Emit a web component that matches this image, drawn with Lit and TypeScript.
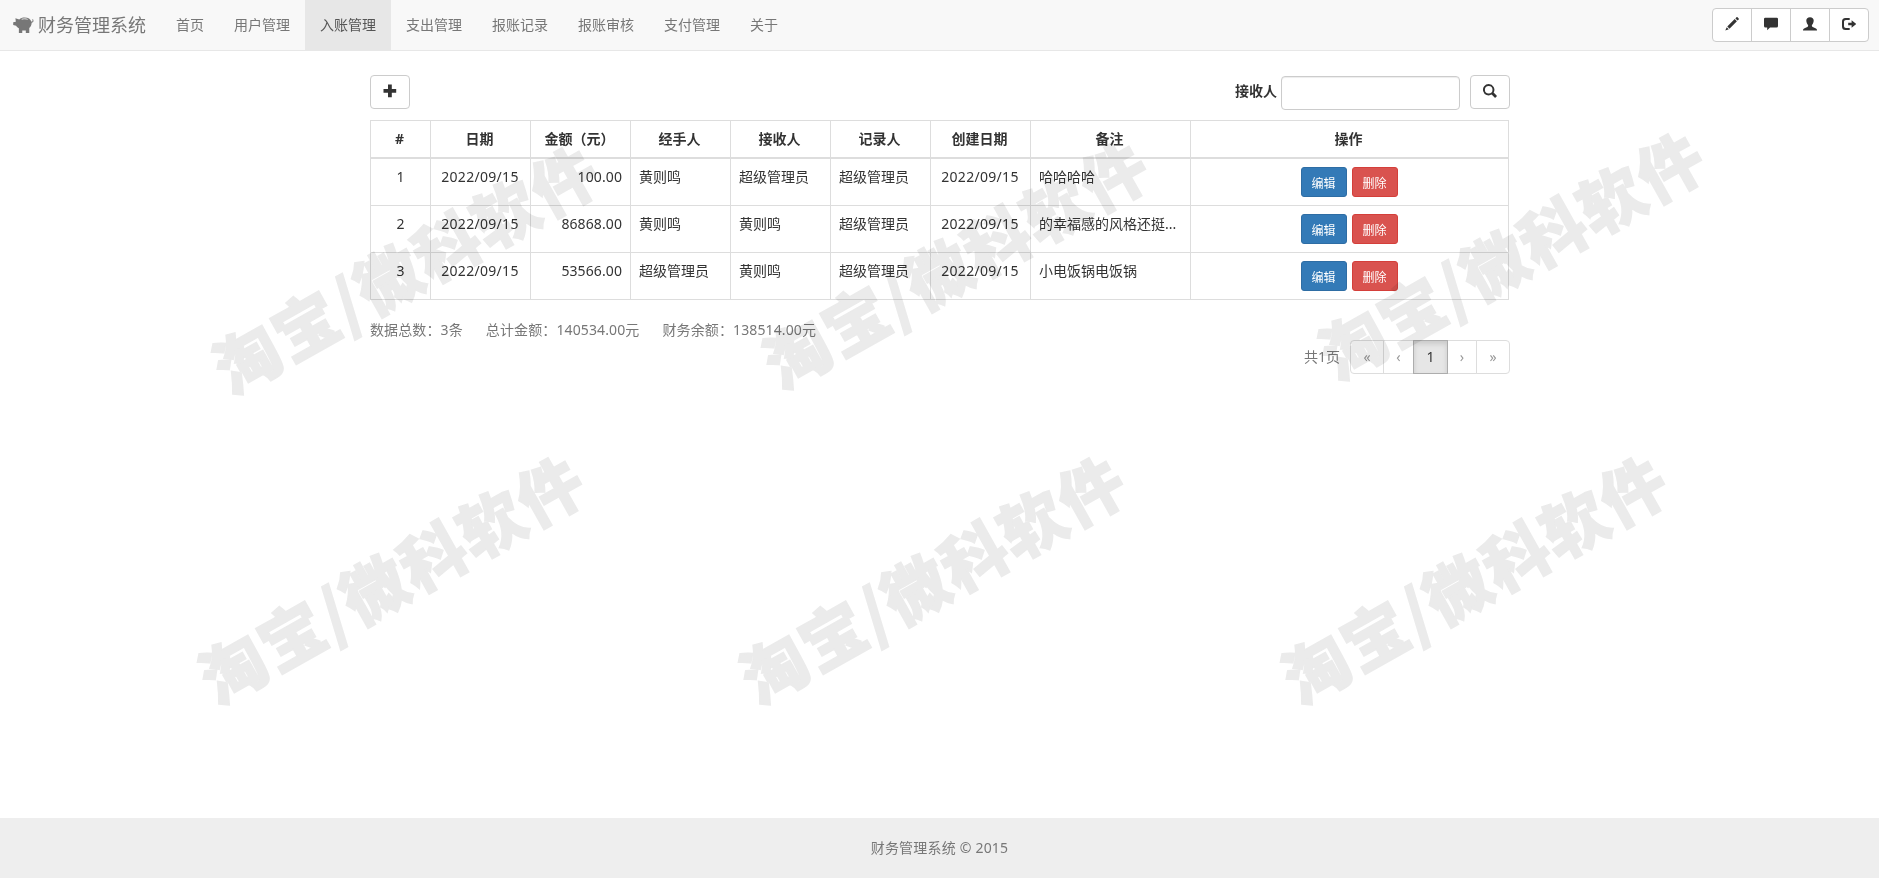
import { LitElement, html, svg, css } from "lit";
import { customElement } from "lit/decorators.js";

const icon = (name: string, body: unknown) => html`<svg class="icon ${name}" viewBox="0 0 14 14" aria-hidden="true">${body}</svg>`;

const plus = icon("plus", svg`<path d="M5 .5h3.800v4.400h4.400v3.900H8.800v4.400H5V8.800H.5V4.900H5z"/>`);
const search = icon("search", svg`<path fill-rule="evenodd" d="M5.700 0a5.700 5.700 0 1 0 2.900 10.600l3 3c.3.300.7.300 1 0l1-1c.3-.3.3-.7 0-1l-3-3A5.700 5.700 0 0 0 5.700 0zm0 1.900a3.800 3.800 0 1 1 0 7.600 3.800 3.800 0 0 1 0-7.600z"/>`);
const pencil = icon("pencil", svg`<path d="M11.500.3c.3-.3.7-.3 1 0l1.200 1.200c.3.300.3.700 0 1l-1.100 1.100-2.200-2.200zM9.700 2.100l2.200 2.200-7.400 7.400-2.200-2.200zM1.700 10.200l2.100 2.100-3.500 1.300z"/>`);
const comment = icon("comment", svg`<path d="M1.200.8h11.600A1.200 1.200 0 0 1 14 2v7a1.500 1.500 0 0 1-1.500 1.500H6l-2.800 2.700v-2.700H1.500A1.500 1.500 0 0 1 0 9V2A1.200 1.200 0 0 1 1.200.8z"/>`);
const user = icon("user", svg`<path d="M7 .2c2.300 0 3.700 1.300 3.700 3.400 0 1.800-.8 3.600-1.800 4.500v.8c0 .5.3.8.8 1l2.800 1.300c1 .5 1.500 1 1.500 2.300H0c0-1.300.5-1.800 1.500-2.300l2.800-1.300c.5-.2.8-.5.8-1v-.8c-1-.9-1.800-2.700-1.800-4.500C3.300 1.500 4.700.200 7 .200z"/>`);
const logout = icon("logout", svg`<path d="M7.700 1v2H4c-1.300 0-2 .7-2 2v4c0 1.300.7 2 2 2h3.700v2H3.500A3.500 3.500 0 0 1 0 9.500v-5A3.500 3.500 0 0 1 3.500 1zM9.600 3.200 14.200 7l-4.600 3.800V8.200H6.200V5.800h3.400z"/>`);
const piggy = html`<svg class="pig" viewBox="0 0 20 16" aria-hidden="true"><path d="M2.300 1 6 2.200C7.300.800 9 .300 11 .300c3.500 0 5.800 1.500 6.500 4 .7.100 1.300-.2 1.100-1l-.4-.9.900-.300c.8 1.600.6 3-1.300 3.300-.1 2.200-.9 3.700-2.300 5v4.700h-3.300v-2.300H8.800v2.300H5.600v-4.400C4.300 9.900 3.500 9.200 3 8.300L.2 7.600V4.900l2.500-.5z"/><path class="slot" d="M8.300 2.100c2-.7 4-.6 5.600.1"/></svg>`;

const NAV = ["首页", "用户管理", "入账管理", "支出管理", "报账记录", "报账审核", "支付管理", "关于"];
const HEAD = ["#", "日期", "金额（元）", "经手人", "接收人", "记录人", "创建日期", "备注", "操作"];
const ROWS = [
  ["1", "2022/09/15", "100.00", "黄则鸣", "超级管理员", "超级管理员", "2022/09/15", "哈哈哈哈"],
  ["2", "2022/09/15", "86868.00", "黄则鸣", "黄则鸣", "超级管理员", "2022/09/15", "的幸福感的风格还挺..."],
  ["3", "2022/09/15", "53566.00", "超级管理员", "黄则鸣", "超级管理员", "2022/09/15", "小电饭锅电饭锅"],
];
const CELL = ["mid", "mid date", "num", "", "", "", "mid date", ""];
const MARKS = [[404, 267], [954, 262], [1510, 253], [390, 577], [931, 577], [1473, 577]];

@customElement("app-root")
export class AppRoot extends LitElement {
  static styles = css`
    :host { display: flex; flex-direction: column; position: relative; height: 100vh; overflow: hidden; background: #fff; color: #333;
      font: 14px/20px "Noto Sans", "Noto Sans CJK SC", sans-serif; }
    * { box-sizing: border-box; }
    .icon { width: 14px; height: 14px; fill: #333; display: block; }
    .navbar { display: flex; height: 51px; flex: none; background: #f8f8f8; border-bottom: 1px solid #e7e7e7; color: #777; }
    .brand { display: flex; align-items: center; width: 161px; padding-left: 13px; gap: 4px; font-size: 18px; white-space: nowrap; }
    .pig { width: 21px; height: 17px; fill: #777; }
    .slot { fill: none; stroke: #f8f8f8; stroke-width: .8; }
    .nav { display: flex; flex: 1; }
    .nav a { padding: 15px; height: 50px; }
    .nav .active { background: #e7e7e7; color: #555; }
    .tools { display: flex; padding: 8px 10px 0 0; }
    .btn { font: inherit; display: flex; align-items: center; justify-content: center; width: 40px; height: 34px; margin: 0; padding: 0 0 2px;
      border: 1px solid #ccc; border-radius: 4px; background: #fff; color: #333; }
    .tools .btn + .btn { margin-left: -1px; }
    .tools .btn { border-radius: 0; }
    .tools .btn:first-child { border-radius: 4px 0 0 4px; }
    .tools .btn:last-child { border-radius: 0 4px 4px 0; }
    .main { width: 1140px; margin: 24px 0 0 370px; flex: 1; }
    .bar { display: flex; height: 45px; align-items: flex-start; }
    .bar label { margin: 6px 4px 0 auto; font-weight: 700; }
    .field { width: 179px; height: 34px; margin: 1px 10px 0 0; border: 1px solid #ccc; border-radius: 4px; box-shadow: inset 0 1px 1px rgba(0,0,0,.075); background: #fff; }
    table { width: 1139px; table-layout: fixed; border-collapse: collapse; }
    th, td { border: 1px solid #ddd; padding: 8px; vertical-align: top; text-align: left; white-space: nowrap; height: 47px; }
    th { border-bottom-width: 2px; text-align: center; font-weight: 700; height: 37px; padding: 8px 9px 8px 7px; }
    .c0 { width: 60px; } .c1 { width: 100px; } .c7 { width: 160px; }
    td.mid { text-align: center; }
    td.date { letter-spacing: .3px; padding: 8px 8px 8px 7px; }
    td.num { text-align: right; letter-spacing: .1px; }
    .acts { display: flex; justify-content: center; gap: 5px; padding-right: 1px; }
    .sm { font: 12px/18px "Noto Sans CJK SC", sans-serif; width: 46px; height: 30px; padding: 2px 0 0; margin: 0; border-radius: 3px; color: #fff; border: 1px solid; }
    .edit { background: #337ab7; border-color: #2e6da4; }
    .del { background: #d9534f; border-color: #d43f3a; }
    .sum { display: flex; gap: 23px; margin-top: 20px; color: #777; letter-spacing: .12px; }
    .pager { display: flex; justify-content: flex-end; align-items: flex-start; color: #777; }
    .pager .total { margin: 7px 11px 0 0; }
    .pg { width: 31px; color: #999; border-color: #ddd; border-radius: 0; background: #fff; padding: 0; margin-left: -1px; }
    .pg.wide { width: 34px; }
    .pg.thin { width: 30px; }
    .pg.first { border-radius: 4px 0 0 4px; }
    .pg.last { border-radius: 0 4px 4px 0; width: 34px; }
    .pg.on { width: 35px; position: relative; background: #e6e6e6; border-color: #adadad; color: #333; box-shadow: inset 0 3px 5px rgba(0,0,0,.125); z-index: 1; }
    footer { flex: none; height: 60px; background: #eee; color: #777; text-align: center; padding-top: 20px; letter-spacing: .2px; }
    .marks { position: absolute; inset: 0; width: 1879px; height: 878px; pointer-events: none; mix-blend-mode: multiply; z-index: 2; }
    .marks text { font: 900 65px "Noto Sans CJK SC", sans-serif; fill: #ebebeb; stroke: #ebebeb; stroke-width: 1.5px; text-anchor: middle; dominant-baseline: central; }
  `;

  render() {
    return html`
      <nav class="navbar">
        <div class="brand">${piggy}<span>财务管理系统</span></div>
        <div class="nav">${NAV.map((n, i) => html`<a class=${i === 2 ? "active" : ""}>${n}</a>`)}</div>
        <div class="tools">${[pencil, comment, user, logout].map((i) => html`<button class="btn">${i}</button>`)}</div>
      </nav>
      <main class="main">
        <div class="bar">
          <button class="btn">${plus}</button>
          <label>接收人</label><input class="field" />
          <button class="btn">${search}</button>
        </div>
        <table>
          <thead><tr>${HEAD.map((h, i) => html`<th class=${i > 0 && i < 7 ? "c1" : `c${i}`}>${h}</th>`)}</tr></thead>
          <tbody>
            ${ROWS.map((r) => html`<tr>${r.map((c, i) => html`<td class=${CELL[i]}>${c}</td>`)}
              <td><div class="acts"><button class="sm edit">编辑</button><button class="sm del">删除</button></div></td></tr>`)}
          </tbody>
        </table>
        <div class="sum"><span>数据总数：3条</span><span>总计金额：140534.00元</span><span>财务余额：138514.00元</span></div>
        <div class="pager">
          <span class="total">共1页</span>
          <button class="btn pg wide first">«</button><button class="btn pg">‹</button><button class="btn pg on">1</button><button class="btn pg thin">›</button><button class="btn pg last">»</button>
        </div>
      </main>
      <footer>财务管理系统 © 2015</footer>
      <svg class="marks" viewBox="0 0 1879 878">
        ${MARKS.map(([x, y]) => svg`<text transform="translate(${x} ${y}) rotate(-29.3)" textLength="428">淘宝/微科软件</text>`)}
      </svg>
    `;
  }
}
